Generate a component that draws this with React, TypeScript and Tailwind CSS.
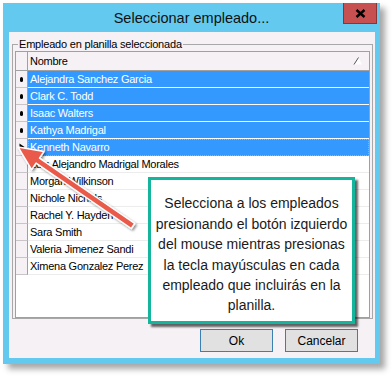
import React from "react";

const selected = [
  "Alejandra Sanchez Garcia",
  "Clark C. Todd",
  "Isaac Walters",
  "Kathya Madrigal",
];
const others = [
  "Luis Alejandro Madrigal Morales",
  "Morgan Wilkinson",
  "Nichole Nichols",
  "Rachel Y. Hayden",
  "Sara Smith",
  "Valeria Jimenez Sandi",
  "Ximena Gonzalez Perez",
];

const gridFont = { fontFamily: '"Liberation Sans", Arial, sans-serif' };

function RowHeader({ children }: { children?: React.ReactNode }) {
  return (
    <div className="w-[12px] h-full shrink-0 bg-[#f6f1f5] border-r border-b border-r-[#a0a0a0] border-b-[#c8c4c8] flex items-center justify-center">
      {children}
    </div>
  );
}

export default function App() {
  return (
    <div className="w-[392px] h-[376px] bg-white relative overflow-hidden pt-[3px] pl-[3px]">
      {/* Window */}
      <div className="w-[377px] h-[361px] bg-[#63c9ef] flex flex-col shadow-[5px_5px_6px_rgba(0,0,0,0.35)]">
        {/* Title bar */}
        <div className="h-[29px] shrink-0 relative flex items-center justify-center">
          <span
            className="text-[14.5px] text-[#111] leading-none pt-[2px]"
            style={{ fontFamily: '"Liberation Sans", Arial, sans-serif' }}
          >
            Seleccionar empleado...
          </span>
          <div className="absolute right-[3px] top-0 w-[34px] h-[21px] bg-[#c75050] border border-[#8c3434] border-t-0 flex items-center justify-center">
            <svg width="11" height="9" viewBox="0 0 11 9">
              <path d="M1.5 1 L9.5 8 M9.5 1 L1.5 8" stroke="#000" strokeWidth="2.4" />
            </svg>
          </div>
        </div>
        {/* Client area */}
        <div className="flex-1 ml-[6px] mr-[5px] mb-[6px] bg-[#f6f1f5] flex flex-col">
          <fieldset
            className="mt-[5px] ml-[3px] mr-[2px] border border-[#a8a8a8] px-[2px] pb-0 h-[282px]"
            style={gridFont}
          >
            <legend className="ml-[3px] px-[1px] text-[11px] leading-[14px] tracking-[-0.2px] text-black">
              Empleado en planilla seleccionada
            </legend>
            {/* Grid */}
            <div className="h-[267px] bg-white border border-[#a0a0a0] flex flex-col text-[11px] tracking-[-0.25px] text-black">
              {/* Header */}
              <div className="h-[19px] shrink-0 flex border-b border-[#a0a0a0] bg-[#f6f1f5]">
                <div className="w-[12px] h-full border-r border-[#a0a0a0]" />
                <div className="flex-1 flex items-center pl-[2px] pr-[6px] justify-between">
                  <span>Nombre</span>
                  <svg width="10" height="8" viewBox="0 0 10 8">
                    <path d="M1 7.5 L5.5 0.5 L9 7.5 Z" fill="#fff" />
                    <path d="M1 7.5 L5.5 0.5" stroke="#555" strokeWidth="1" />
                  </svg>
                </div>
              </div>
              {selected.map((n) => (
                <div key={n} className="h-[17px] shrink-0 flex">
                  <RowHeader>
                    <div className="w-[3px] h-[5px] rounded-full bg-black" />
                  </RowHeader>
                  <div className="flex-1 bg-[#3399ff] border-b border-white text-white flex items-center pl-[2px]">
                    {n}
                  </div>
                </div>
              ))}
              <div className="h-[17px] shrink-0 flex">
                <RowHeader>
                  <svg width="6" height="8" viewBox="0 0 6 8">
                    <path d="M0.5 0.5 L5.5 4 L0.5 7.5 Z" fill="#000" />
                  </svg>
                </RowHeader>
                <div className="flex-1 bg-[#3399ff] border border-dotted border-[#f0a040] text-white flex items-center pl-[1px]">
                  Kenneth Navarro
                </div>
              </div>
              {others.map((n) => (
                <div key={n} className="h-[17px] shrink-0 flex">
                  <RowHeader />
                  <div className="flex-1 bg-white border-b border-[#ececec] flex items-center pl-[2px]">
                    {n}
                  </div>
                </div>
              ))}
              <div className="flex-1" />
            </div>
          </fieldset>
          {/* Buttons */}
          <div className="mt-[10px] flex justify-end gap-[12px] pr-[17px] text-[12px]" style={gridFont}>
            <button className="w-[73px] h-[23px] bg-[#e1e1e1] border border-[#3c7fb1] text-black">
              Ok
            </button>
            <button className="w-[73px] h-[23px] bg-[#e1e1e1] border border-[#707070] text-black">
              Cancelar
            </button>
          </div>
        </div>
      </div>

      {/* Callout overlay */}
      <div
        className="absolute left-[148px] top-[177px] w-[207px] h-[147px] bg-white border-[3.5px] border-[#14b49d] shadow-[3px_3px_2px_rgba(0,0,0,0.6)] flex flex-col items-center justify-center text-[14px] leading-[20.4px] text-[#1a1a1a] pt-[8px]"
        style={{ fontFamily: '"Liberation Sans", Arial, sans-serif' }}
      >
        <span>Selecciona a los empleados</span>
        <span>presionando el botón izquierdo</span>
        <span>del mouse mientras presionas</span>
        <span>la tecla mayúsculas en cada</span>
        <span>empleado que incluirás en la</span>
        <span>planilla.</span>
      </div>

      {/* Arrow overlay */}
      <svg className="absolute left-0 top-0" width="392" height="376" viewBox="0 0 392 376">
        <defs>
          <filter id="sh" x="-20%" y="-20%" width="140%" height="140%">
            <feDropShadow dx="1.5" dy="1.5" stdDeviation="1.2" floodColor="#000" floodOpacity="0.45" />
          </filter>
        </defs>
        <path
          d="M18 147 L44 151.5 L39.5 158.1 L134.7 223.5 L131.3 228.5 L36.1 163.1 L31.6 169.7 Z"
          fill="#ea5a4b"
          stroke="#fff"
          strokeWidth="1.5"
          strokeLinejoin="round"
          filter="url(#sh)"
        />
      </svg>
    </div>
  );
}
